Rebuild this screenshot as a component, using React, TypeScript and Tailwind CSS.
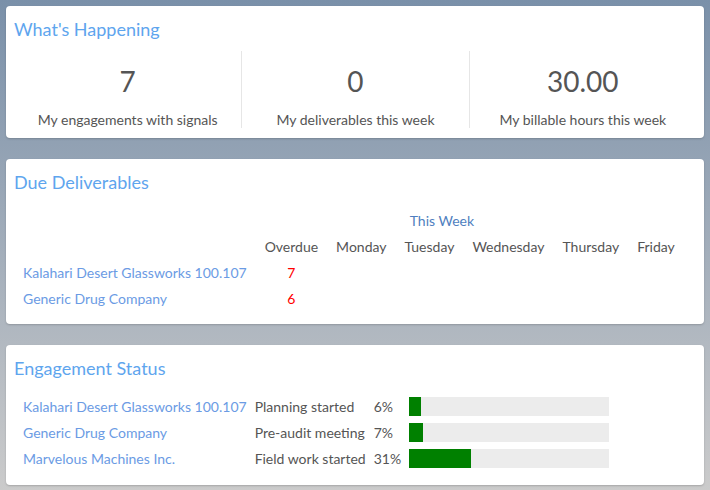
import React from 'react';

const stats = [
  { value: '7', label: 'My engagements with signals' },
  { value: '0', label: 'My deliverables this week' },
  { value: '30.00', label: 'My billable hours this week' },
];

const days = ['Monday', 'Tuesday', 'Wednesday', 'Thursday', 'Friday'];

const dueRows = [
  { name: 'Kalahari Desert Glassworks 100.107', overdue: 7 },
  { name: 'Generic Drug Company', overdue: 6 },
];

const statusRows = [
  { name: 'Kalahari Desert Glassworks 100.107', status: 'Planning started', pct: 6 },
  { name: 'Generic Drug Company', status: 'Pre-audit meeting', pct: 7 },
  { name: 'Marvelous Machines Inc.', status: 'Field work started', pct: 31 },
];

function Card({ title, children }: { title: string; children: React.ReactNode }) {
  return (
    <div className="bg-white rounded shadow-[0_1px_2px_rgba(0,0,0,0.18)] px-[8px] pt-[9px]">
      <h2 className="text-[18px] leading-[28px] text-[#5ea5ee]">{title}</h2>
      {children}
    </div>
  );
}

export default function App() {
  return (
    <div
      className="min-h-screen p-[6px] flex flex-col gap-[21px] bg-gradient-to-b from-[#7a90a9] to-[#cbcbcb] text-[14px] text-[#555555]"
      style={{ fontFamily: 'Lato, "Noto Sans", sans-serif' }}
    >
      <Card title="What's Happening">
        <div className="mt-[8px] pb-[10px] grid grid-cols-3">
          {stats.map((s, i) => (
            <div
              key={s.label}
              className={`h-[77px] pt-[13px] flex flex-col items-center ${i > 0 ? 'border-l border-[#e6e6e6]' : ''}`}
            >
              <div className="text-[28px] leading-[34px]">{s.value}</div>
              <div className="mt-[12px] leading-[20px]">{s.label}</div>
            </div>
          ))}
        </div>
      </Card>

      <Card title="Due Deliverables">
        <table className="mt-[11px] mb-[13px] border-collapse">
          <tbody>
            <tr className="h-[26px]">
              <td />
              <td colSpan={5} className="text-center text-[#4f7fc0]">This Week</td>
              <td />
            </tr>
            <tr className="h-[26px]">
              <td />
              <td className="px-[9px] text-center">Overdue</td>
              {days.map((d) => (
                <td key={d} className="px-[9px] text-center">{d}</td>
              ))}
            </tr>
            {dueRows.map((r) => (
              <tr key={r.name} className="h-[26px]">
                <td className="px-[9px] text-[#6b9be4]">{r.name}</td>
                <td className="px-[9px] text-center text-[#ff0000]">{r.overdue}</td>
                {days.map((d) => (
                  <td key={d} />
                ))}
              </tr>
            ))}
          </tbody>
        </table>
      </Card>

      <Card title="Engagement Status">
        <table className="mt-[11px] mb-[14px] border-collapse">
          <tbody>
            {statusRows.map((r) => (
              <tr key={r.name} className="h-[26px]">
                <td className="pl-[9px] pr-[4px] text-[#6b9be4]">{r.name}</td>
                <td className="px-[4px]">{r.status}</td>
                <td className="px-[4px]">{r.pct}%</td>
                <td className="px-[4px]">
                  <div className="w-[200px] h-[19px] bg-[#ececec]">
                    <div className="h-full bg-[#008000]" style={{ width: `${r.pct}%` }} />
                  </div>
                </td>
              </tr>
            ))}
          </tbody>
        </table>
      </Card>
    </div>
  );
}
